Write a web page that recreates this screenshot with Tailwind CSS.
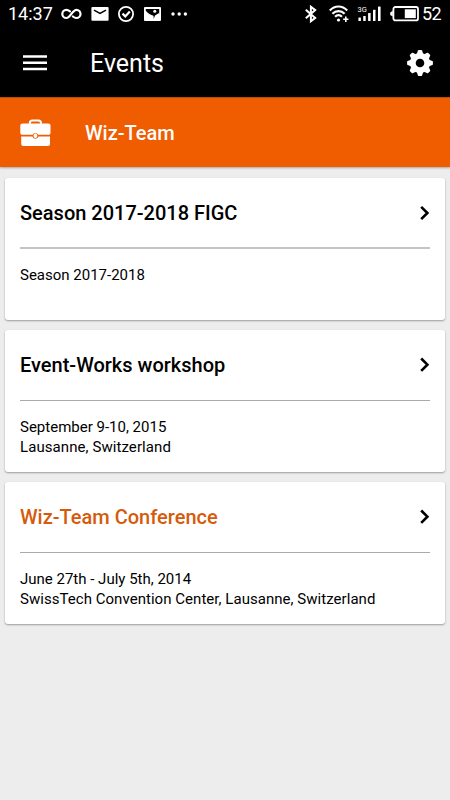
<!DOCTYPE html>
<html lang="en">
<head>
<meta charset="utf-8">
<meta name="viewport" content="width=device-width">
<title>Events</title>
<script src="https://cdn.jsdelivr.net/npm/@tailwindcss/browser@4"></script>
</head>
<body class="bg-[#ededed] font-['Roboto',sans-serif] text-black overflow-hidden">
<div class="w-[450px] h-[800px] flex flex-col">
  <div class="h-7 shrink-0 bg-black text-white flex items-center justify-between pl-2 pr-[9px]">
    <div class="flex items-center h-7">
      <span class="w-[53px] text-[18px] leading-7 whitespace-nowrap">14:37</span>
      <svg class="w-[21px] h-7 mr-[9px]" viewBox="0 0 21 28" fill="none" stroke="#fff" stroke-width="2.2" stroke-linecap="round"><path d="M9 11.3C7.8 10.4 6.8 9.8 5.4 9.8a4.1 4.1 0 0 0 0 8.2c4 0 6-8.2 10-8.2a4.1 4.1 0 0 1 0 8.2c-1.4 0-2.4-.6-3.5-1.5"/></svg>
      <svg class="w-[18px] h-7 mr-[9px]" viewBox="0 0 18 28"><rect x=".4" y="7" width="17.2" height="13.7" rx="1" fill="#fff"/><path d="m3 10.2 6 3.3 6-3.3" fill="none" stroke="#000" stroke-width="1.5"/></svg>
      <svg class="w-4 h-7 mr-[10px]" viewBox="0 0 16 28" fill="none" stroke="#fff"><circle cx="8" cy="14" r="7.1" stroke-width="1.8"/><path d="m4.5 13.6 2.8 2.8 4.5-5" stroke-width="2.2"/></svg>
      <svg class="w-[17px] h-7 mr-[10px]" viewBox="0 0 17 28"><rect y="7" width="17" height="14" rx="1" fill="#fff"/><path d="M1.800 9h13.400v5.500L9.800 19l-.3-3.200C6.800 15.300 3.800 13.300 1.800 10.800z" fill="#000"/><circle cx="10.800" cy="11.300" r="1.500" fill="#fff"/><path d="m11 15.500 4.400-2.700v6.400H9.600z" fill="#fff"/></svg>
      <svg class="w-[18px] h-7" viewBox="0 0 18 28" fill="#fff"><circle cx="2" cy="14" r="1.7"/><circle cx="8.2" cy="14" r="1.7"/><circle cx="14.4" cy="14" r="1.7"/></svg>
    </div>
    <div class="flex items-center h-7">
      <svg class="w-3 h-7 mr-3" viewBox="1 0 12 28" overflow="visible" fill="none" stroke="#fff" stroke-width="2"><path d="m.8 9.700 9.400 8.200-4.300 3.300V6.800l4.300 3.300L.8 18.300"/></svg>
      <svg class="w-5 h-7 mr-2" viewBox="1 0 20 28" overflow="visible" fill="none" stroke="#fff" stroke-width="2.200"><path d="M.8 10.400c5-5.200 12.400-5.200 17.400 0M3.400 13.800c3.500-3.700 8.800-3.700 12.200 0M6.100 16.800c2-2.100 4.800-2.100 6.800 0"/><circle cx="9.500" cy="20" r="1.600" fill="#fff" stroke="none"/><path d="M14.200 19.200h5.300M16.800 16.600v5.300" stroke-width="1.600"/></svg>
      <svg class="w-6 h-7 mr-2" viewBox=".3 0 24 28" overflow="visible" fill="#fff"><text x="-.2" y="12" font-size="7.500">3G</text><rect x=".7" y="17.500" width="2.500" height="3.500" rx=".5"/><rect x="5.500" y="16" width="2.500" height="5" rx=".5"/><rect x="10.400" y="13" width="2.500" height="8" rx=".5"/><rect x="15.300" y="9.700" width="2.500" height="11.300" rx=".5"/><rect x="20.300" y="6.500" width="2.600" height="14.500" rx=".5"/></svg>
      <svg class="w-[29px] h-7 mr-[3px]" viewBox="0 0 29 28"><rect x="3.400" y="7" width="24.600" height="13.400" rx="2" fill="none" stroke="#fff" stroke-width="1.800"/><path d="M2.800 10.800v5.800L.2 15V12.400z" fill="#fff"/><rect x="14.800" y="9.300" width="11" height="8.800" fill="#fff"/></svg>
      <span class="text-[18px] leading-7 w-[19px] tracking-[-.5px]">52</span>
    </div>
  </div>
  <header class="h-[69px] shrink-0 bg-black text-white flex items-center pl-[23px] pr-[17px]">
    <svg class="w-6 h-4" viewBox="0 0 24 16" fill="#fff"><path d="M0 .3h24v2.500H0zM0 6.500h24V9H0zM0 12.700h24v2.500H0z"/></svg>
    <h1 class="ml-[43px] text-[25px] leading-8 flex-1 pt-[2px]">Events</h1>
    <svg class="w-[26px] h-[26px]" viewBox="-13 -13 26 26" fill="#fff" stroke="#fff">
      <circle r="7.200" fill="none" stroke-width="5.800"/>
      <g stroke="none">
        <path id="t" d="M-3.300-9-2-12.400q.2-.5.700-.5h2.600q.5 0 .7.500L3.300-9z"/>
        <use href="#t" transform="rotate(45)"/><use href="#t" transform="rotate(90)"/><use href="#t" transform="rotate(135)"/><use href="#t" transform="rotate(180)"/><use href="#t" transform="rotate(225)"/><use href="#t" transform="rotate(270)"/><use href="#t" transform="rotate(315)"/>
      </g>
    </svg>
  </header>
  <div class="h-[70px] shrink-0 bg-[#f05c00] border-t border-[#bd4c0b] shadow-[0_1px_2px_rgba(0,0,0,.3)] text-white flex items-center pl-5">
    <svg class="w-[31px] h-[28px]" viewBox="0 0 31 28"><path d="M9.800 5.500V4c0-1.600.9-2.500 2.500-2.500h6.200c1.600 0 2.500.9 2.500 2.500v1.500" fill="none" stroke="#fff" stroke-width="2"/><path d="M2.600 4.500h25.600c1.500 0 2.300.8 2.300 2.200v7c0 1.400-.9 2.100-2.300 2.100H18.200a3 3 0 0 0-5.600 0H2.600C1.200 15.800.3 15.100.3 13.700v-7c0-1.400.9-2.200 2.300-2.200zM1.200 17.400h11.200a3.100 3.100 0 0 0 6 0h11.600v7.500c0 1.300-.7 2-2 2H3.200c-1.300 0-2-.7-2-2z" fill="#fff"/><ellipse cx="15.400" cy="16.700" rx="1.900" ry="2.300" fill="#fff"/></svg>
    <span class="ml-[34px] text-[20px] font-medium leading-7 pt-px">Wiz-Team</span>
  </div>
  <main class="flex flex-col gap-[10px] px-[5px] pt-[11px]">
    <article class="h-[142px] bg-white rounded-[3px] shadow-[0_1px_2px_rgba(0,0,0,.35)] px-[15px]">
      <div class="h-[69px] pt-px flex items-center justify-between border-b-2 border-[#c4c4c4] box-content -mt-px"><h2 class="text-[20px] font-medium">Season 2017-2018 FIGC</h2><svg class="w-[10px] h-4" viewBox="0 0 10 16" fill="none" stroke="#000" stroke-width="2.600"><path d="m1.200 1.800 6.200 6.200-6.200 6.200"/></svg></div>
      <p class="pt-[16px] text-[15px] leading-[20.500px]">Season 2017-2018</p>
    </article>
    <article class="h-[142px] bg-white rounded-[3px] shadow-[0_1px_2px_rgba(0,0,0,.35)] px-[15px]">
      <div class="h-[70px] flex items-center justify-between border-b border-[#aaa] box-content"><h2 class="text-[20px] font-medium">Event-Works workshop</h2><svg class="w-[10px] h-4" viewBox="0 0 10 16" fill="none" stroke="#000" stroke-width="2.600"><path d="m1.200 1.500 6.200 6.200-6.200 6.200"/></svg></div>
      <p class="pt-[16px] text-[15px] leading-5">September 9-10, 2015<br><span class="tracking-[.08px]">Lausanne, Switzerland</span></p>
    </article>
    <article class="h-[142px] bg-white rounded-[3px] shadow-[0_1px_2px_rgba(0,0,0,.35)] px-[15px]">
      <div class="h-[70px] flex items-center justify-between border-b border-[#aaa] box-content"><h2 class="text-[20px] font-medium text-[#d55b0b]">Wiz-Team Conference</h2><svg class="w-[10px] h-4" viewBox="0 0 10 16" fill="none" stroke="#000" stroke-width="2.600"><path d="m1.200 1.500 6.200 6.200-6.200 6.200"/></svg></div>
      <p class="pt-[16px] text-[15px] leading-5">June 27th - July 5th, 2014<br><span class="tracking-[.04px]">SwissTech Convention Center, Lausanne, Switzerland</span></p>
    </article>
  </main>
</div>
</body>
</html>
